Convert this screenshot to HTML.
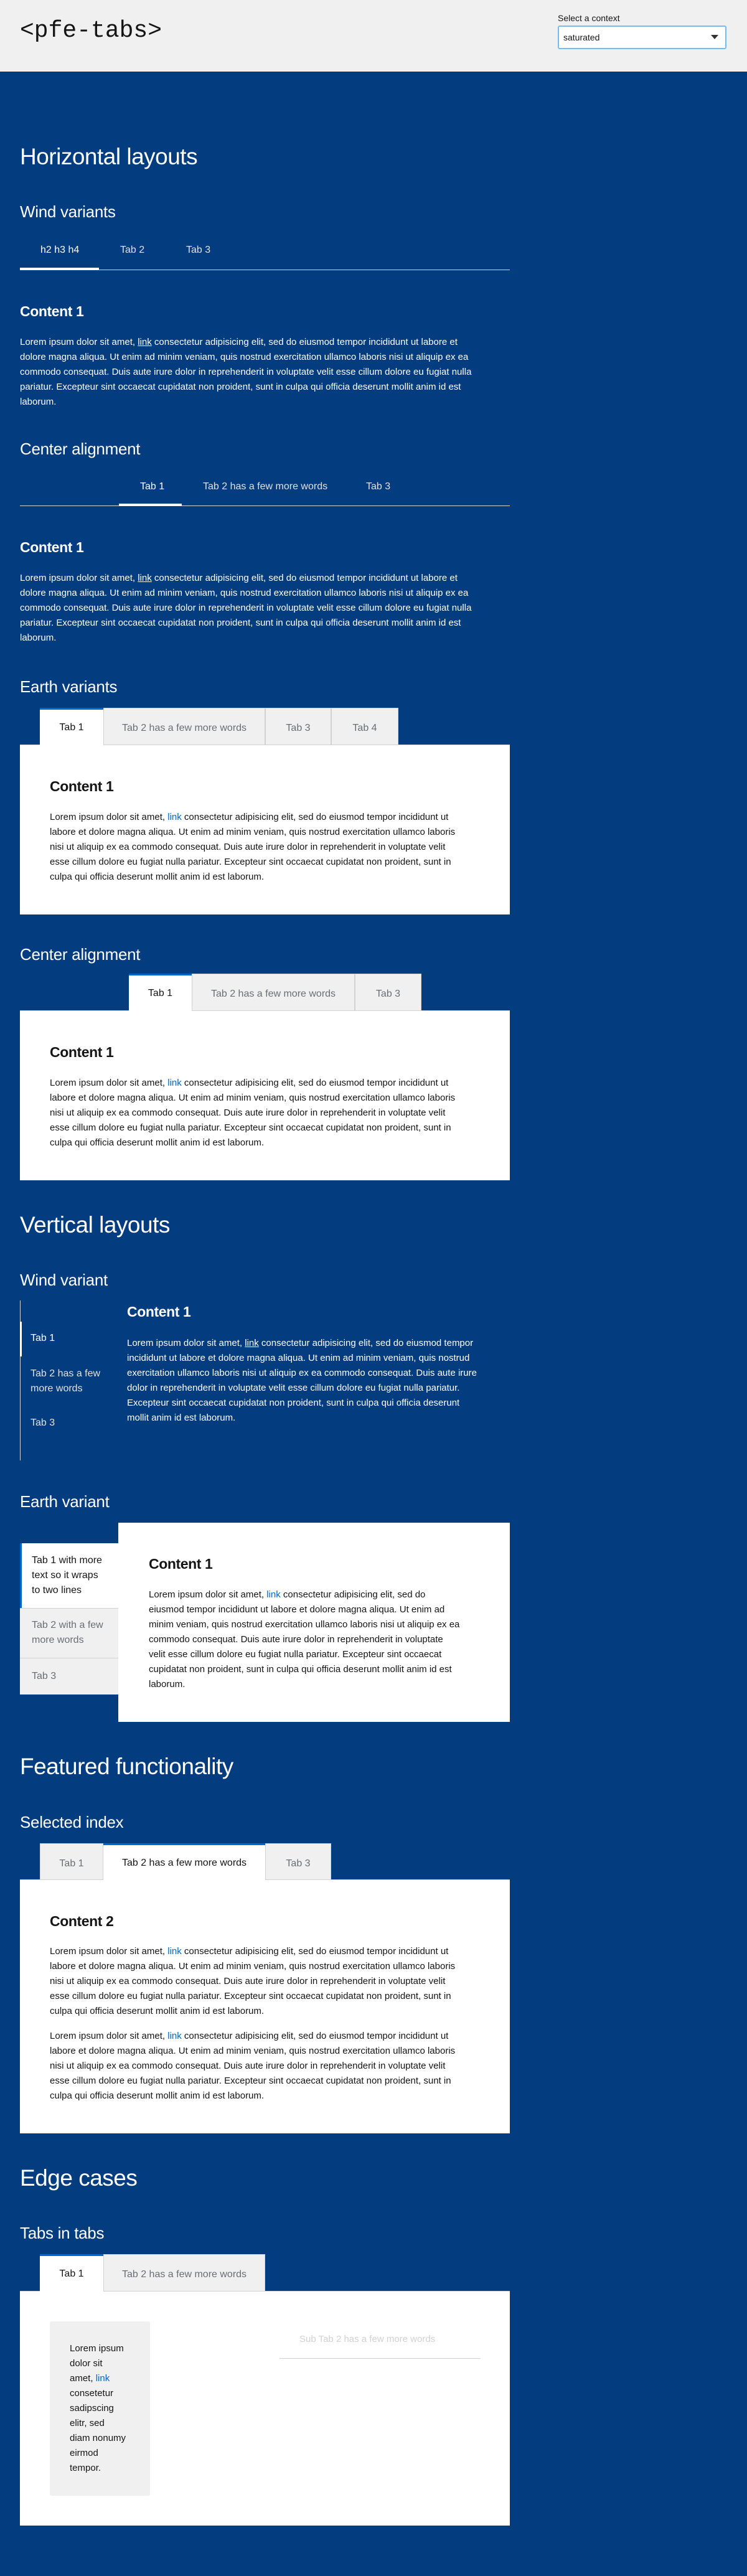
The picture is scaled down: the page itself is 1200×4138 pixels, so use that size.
<!DOCTYPE html>
<html><head><meta charset="utf-8">
<style>
*{margin:0;padding:0;box-sizing:border-box}
body{width:1200px;height:4138px;background:#033d80;font-family:"Liberation Sans",sans-serif;position:relative;overflow:hidden}
.a{position:absolute;white-space:nowrap}
.hdr{left:0;top:0;width:1200px;height:115px;background:#f0f0f0}
.h2{font-size:37px;line-height:48px;color:#fff;letter-spacing:-.5px}
.h3{font-size:26px;line-height:34px;color:#fff;letter-spacing:-.3px}
.c{font-size:23px;line-height:30px;font-weight:bold;letter-spacing:-.4px}
.p{font-size:15px;line-height:24px}
.w{color:#fff}
.k{color:#151515}
.p a{color:inherit;text-decoration:underline}
.k a{color:#06c;text-decoration:none}
.tt{font-size:16px;line-height:24px}
.et{position:absolute;background:#f0f0f0;border:1px solid #d2d2d2;border-bottom:none}
.et.on{background:#fff;border:none;border-top:3px solid #06c}
.et span{position:absolute;left:0;right:0;text-align:center;font-size:16px;line-height:24px;color:#6a6e73;white-space:nowrap}
.et.on span{color:#151515}
.panel{position:absolute;background:#fff;border-top:1px solid #d2d2d2}
</style></head><body>
<div class="a hdr"></div>
<div class="a" style="left:32px;top:26px;font-family:'Liberation Mono',monospace;font-size:38px;line-height:48px;color:#151515">&lt;pfe-tabs&gt;</div>
<div class="a" style="left:896px;top:20px;font-size:14px;line-height:18px;color:#151515">Select a context</div>
<div class="a" style="left:896px;top:41px;width:271px;height:38px;background:#fff;border:2px solid #73bcf7;border-radius:3px"></div>
<div class="a" style="left:905px;top:50px;font-size:14px;line-height:20px;color:#151515">saturated</div>
<svg class="a" style="left:1142px;top:56px" width="12" height="8"><path d="M0 0H12L6 7Z" fill="#333"/></svg>

<div class="a h2" style="left:32px;top:228px">Horizontal layouts</div>
<div class="a h3" style="left:32px;top:323px">Wind variants</div>
<div class="a tt" style="left:65px;top:390px;color:#fff">h2 h3 h4</div>
<div class="a tt" style="left:193px;top:390px;color:#e0e0e0">Tab 2</div>
<div class="a tt" style="left:299px;top:390px;color:#e0e0e0">Tab 3</div>
<div class="a" style="left:32px;top:433px;width:787px;height:1px;background:#d2d2d2"></div>
<div class="a" style="left:32px;top:430px;width:127px;height:4px;background:#fff"></div>
<div class="a c w" style="left:32px;top:485px">Content 1</div>
<div class="a p w" style="left:32px;top:538px">Lorem ipsum dolor sit amet, <a>link</a> consectetur adipisicing elit, sed do eiusmod tempor incididunt ut labore et<br>dolore magna aliqua. Ut enim ad minim veniam, quis nostrud exercitation ullamco laboris nisi ut aliquip ex ea<br>commodo consequat. Duis aute irure dolor in reprehenderit in voluptate velit esse cillum dolore eu fugiat nulla<br>pariatur. Excepteur sint occaecat cupidatat non proident, sunt in culpa qui officia deserunt mollit anim id est<br>laborum.</div>

<div class="a h3" style="left:32px;top:704px">Center alignment</div>
<div class="a tt" style="left:225px;top:770px;color:#fff">Tab 1</div>
<div class="a tt" style="left:326px;top:770px;color:#e0e0e0">Tab 2 has a few more words</div>
<div class="a tt" style="left:588px;top:770px;color:#e0e0e0">Tab 3</div>
<div class="a" style="left:32px;top:812px;width:787px;height:1px;background:#d2d2d2"></div>
<div class="a" style="left:191px;top:809px;width:101px;height:4px;background:#fff"></div>
<div class="a c w" style="left:32px;top:864px">Content 1</div>
<div class="a p w" style="left:32px;top:917px">Lorem ipsum dolor sit amet, <a>link</a> consectetur adipisicing elit, sed do eiusmod tempor incididunt ut labore et<br>dolore magna aliqua. Ut enim ad minim veniam, quis nostrud exercitation ullamco laboris nisi ut aliquip ex ea<br>commodo consequat. Duis aute irure dolor in reprehenderit in voluptate velit esse cillum dolore eu fugiat nulla<br>pariatur. Excepteur sint occaecat cupidatat non proident, sunt in culpa qui officia deserunt mollit anim id est<br>laborum.</div>

<div class="a h3" style="left:32px;top:1086px">Earth variants</div>
<div class="panel" style="left:32px;top:1196px;width:787px;height:273px"></div>
<div class="et on" style="left:64px;top:1137px;width:102px;height:60px"><span style="top:17px">Tab 1</span></div>
<div class="et" style="left:166px;top:1137px;width:260px;height:59px"><span style="top:20px">Tab 2 has a few more words</span></div>
<div class="et" style="left:426px;top:1137px;width:106px;height:59px"><span style="top:20px">Tab 3</span></div>
<div class="et" style="left:532px;top:1137px;width:108px;height:59px"><span style="top:20px">Tab 4</span></div>
<div class="a c k" style="left:80px;top:1248px">Content 1</div>
<div class="a p k" style="left:80px;top:1301px">Lorem ipsum dolor sit amet, <a>link</a> consectetur adipisicing elit, sed do eiusmod tempor incididunt ut<br>labore et dolore magna aliqua. Ut enim ad minim veniam, quis nostrud exercitation ullamco laboris<br>nisi ut aliquip ex ea commodo consequat. Duis aute irure dolor in reprehenderit in voluptate velit<br>esse cillum dolore eu fugiat nulla pariatur. Excepteur sint occaecat cupidatat non proident, sunt in<br>culpa qui officia deserunt mollit anim id est laborum.</div>

<div class="a h3" style="left:32px;top:1516px">Center alignment</div>
<div class="panel" style="left:32px;top:1623px;width:787px;height:273px"></div>
<div class="et on" style="left:207px;top:1564px;width:101px;height:60px"><span style="top:17px">Tab 1</span></div>
<div class="et" style="left:308px;top:1564px;width:262px;height:59px"><span style="top:20px">Tab 2 has a few more words</span></div>
<div class="et" style="left:570px;top:1564px;width:107px;height:59px"><span style="top:20px">Tab 3</span></div>
<div class="a c k" style="left:80px;top:1675px">Content 1</div>
<div class="a p k" style="left:80px;top:1728px">Lorem ipsum dolor sit amet, <a>link</a> consectetur adipisicing elit, sed do eiusmod tempor incididunt ut<br>labore et dolore magna aliqua. Ut enim ad minim veniam, quis nostrud exercitation ullamco laboris<br>nisi ut aliquip ex ea commodo consequat. Duis aute irure dolor in reprehenderit in voluptate velit<br>esse cillum dolore eu fugiat nulla pariatur. Excepteur sint occaecat cupidatat non proident, sunt in<br>culpa qui officia deserunt mollit anim id est laborum.</div>

<div class="a h2" style="left:32px;top:1944px">Vertical layouts</div>
<div class="a h3" style="left:32px;top:2039px">Wind variant</div>
<div class="a" style="left:32px;top:2089px;width:1px;height:257px;background:#d2d2d2"></div>
<div class="a" style="left:32px;top:2123px;width:3px;height:56px;background:#fff"></div>
<div class="a tt" style="left:49px;top:2138px;color:#fff">Tab 1</div>
<div class="a tt" style="left:49px;top:2195px;color:#e0e0e0">Tab 2 has a few<br>more words</div>
<div class="a tt" style="left:49px;top:2274px;color:#e0e0e0">Tab 3</div>
<div class="a c w" style="left:204px;top:2092px">Content 1</div>
<div class="a p w" style="left:204px;top:2146px">Lorem ipsum dolor sit amet, <a>link</a> consectetur adipisicing elit, sed do eiusmod tempor<br>incididunt ut labore et dolore magna aliqua. Ut enim ad minim veniam, quis nostrud<br>exercitation ullamco laboris nisi ut aliquip ex ea commodo consequat. Duis aute irure<br>dolor in reprehenderit in voluptate velit esse cillum dolore eu fugiat nulla pariatur.<br>Excepteur sint occaecat cupidatat non proident, sunt in culpa qui officia deserunt<br>mollit anim id est laborum.</div>

<div class="a h3" style="left:32px;top:2395px">Earth variant</div>
<div class="a" style="left:190px;top:2446px;width:629px;height:320px;background:#fff"></div>
<div class="a" style="left:32px;top:2479px;width:158px;height:104px;background:#fff;border-left:3px solid #06c"></div>
<div class="a tt" style="left:51px;top:2495px;color:#151515">Tab 1 with more<br>text so it wraps<br>to two lines</div>
<div class="a" style="left:32px;top:2583px;width:158px;height:81px;background:#f0f0f0;border-top:1px solid #d2d2d2;border-bottom:1px solid #d2d2d2"></div>
<div class="a tt" style="left:51px;top:2599px;color:#6a6e73">Tab 2 with a few<br>more words</div>
<div class="a" style="left:32px;top:2664px;width:158px;height:58px;background:#f0f0f0"></div>
<div class="a tt" style="left:51px;top:2681px;color:#6a6e73">Tab 3</div>
<div class="a c k" style="left:239px;top:2497px">Content 1</div>
<div class="a p k" style="left:239px;top:2550px">Lorem ipsum dolor sit amet, <a>link</a> consectetur adipisicing elit, sed do<br>eiusmod tempor incididunt ut labore et dolore magna aliqua. Ut enim ad<br>minim veniam, quis nostrud exercitation ullamco laboris nisi ut aliquip ex ea<br>commodo consequat. Duis aute irure dolor in reprehenderit in voluptate<br>velit esse cillum dolore eu fugiat nulla pariatur. Excepteur sint occaecat<br>cupidatat non proident, sunt in culpa qui officia deserunt mollit anim id est<br>laborum.</div>

<div class="a h2" style="left:32px;top:2814px">Featured functionality</div>
<div class="a h3" style="left:32px;top:2910px">Selected index</div>
<div class="panel" style="left:32px;top:3019px;width:787px;height:408px"></div>
<div class="et" style="left:64px;top:2961px;width:102px;height:58px"><span style="top:20px">Tab 1</span></div>
<div class="et on" style="left:166px;top:2961px;width:260px;height:59px"><span style="top:17px">Tab 2 has a few more words</span></div>
<div class="et" style="left:426px;top:2961px;width:106px;height:58px"><span style="top:20px">Tab 3</span></div>
<div class="a c k" style="left:80px;top:3071px">Content 2</div>
<div class="a p k" style="left:80px;top:3123px">Lorem ipsum dolor sit amet, <a>link</a> consectetur adipisicing elit, sed do eiusmod tempor incididunt ut<br>labore et dolore magna aliqua. Ut enim ad minim veniam, quis nostrud exercitation ullamco laboris<br>nisi ut aliquip ex ea commodo consequat. Duis aute irure dolor in reprehenderit in voluptate velit<br>esse cillum dolore eu fugiat nulla pariatur. Excepteur sint occaecat cupidatat non proident, sunt in<br>culpa qui officia deserunt mollit anim id est laborum.</div>
<div class="a p k" style="left:80px;top:3259px">Lorem ipsum dolor sit amet, <a>link</a> consectetur adipisicing elit, sed do eiusmod tempor incididunt ut<br>labore et dolore magna aliqua. Ut enim ad minim veniam, quis nostrud exercitation ullamco laboris<br>nisi ut aliquip ex ea commodo consequat. Duis aute irure dolor in reprehenderit in voluptate velit<br>esse cillum dolore eu fugiat nulla pariatur. Excepteur sint occaecat cupidatat non proident, sunt in<br>culpa qui officia deserunt mollit anim id est laborum.</div>

<div class="a h2" style="left:32px;top:3475px">Edge cases</div>
<div class="a h3" style="left:32px;top:3570px">Tabs in tabs</div>
<div class="panel" style="left:32px;top:3680px;width:787px;height:377px"></div>
<div class="et on" style="left:64px;top:3621px;width:102px;height:60px"><span style="top:17px">Tab 1</span></div>
<div class="et" style="left:166px;top:3621px;width:260px;height:59px"><span style="top:20px">Tab 2 has a few more words</span></div>
<div class="a" style="left:80px;top:3729px;width:161px;height:280px;background:#f0f0f0;border-radius:3px"></div>
<div class="a p k" style="left:112px;top:3761px">Lorem ipsum<br>dolor sit<br>amet, <a>link</a><br>consetetur<br>sadipscing<br>elitr, sed<br>diam nonumy<br>eirmod<br>tempor.</div>
<div class="a tt" style="left:481px;top:3746px;color:#d2d2d2;font-size:15px">Sub Tab 2 has a few more words</div>
<div class="a" style="left:449px;top:3788px;width:323px;height:1px;background:#d2d2d2"></div>
</body></html>
